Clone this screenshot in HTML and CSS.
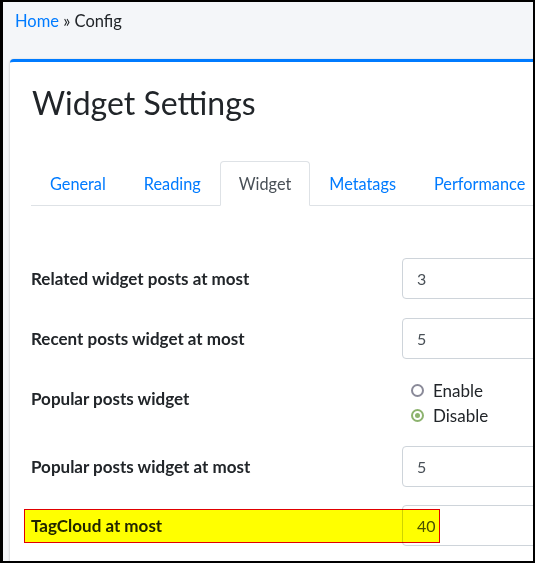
FILE: index.html
```html
<!DOCTYPE html>
<html>
<head>
<meta charset="utf-8">
<link rel="stylesheet" href="styles.css">
</head>
<body>
<div class="frame">
  <div class="breadcrumb"><a class="crumb-link">Home</a> » Config</div>
  <div class="card">
    <h1 class="title">Widget Settings</h1>
    <ul class="tabs">
      <li class="tab">General</li>
      <li class="tab">Reading</li>
      <li class="tab active">Widget</li>
      <li class="tab">Metatags</li>
      <li class="tab">Performance</li>
    </ul>
    <div class="form">
      <div class="row">
        <div class="label">Related widget posts at most</div>
        <div class="input">3</div>
      </div>
      <div class="row">
        <div class="label">Recent posts widget at most</div>
        <div class="input">5</div>
      </div>
      <div class="row">
        <div class="label">Popular posts widget</div>
        <div class="radios">
          <div class="radio"><span class="dot"></span>Enable</div>
          <div class="radio"><span class="dot checked"></span>Disable</div>
        </div>
      </div>
      <div class="row tight">
        <div class="label">Popular posts widget at most</div>
        <div class="input">5</div>
      </div>
      <div class="row">
        <div class="label">TagCloud at most</div>
        <div class="input">40</div>
        <div class="highlight"></div>
      </div>
    </div>
  </div>
</div>
</body>
</html>
```

FILE: styles.css
```css
* { box-sizing: border-box; }
html, body { margin: 0; padding: 0; }
body { font-family: "Lato", "Open Sans", sans-serif; color: #212529; }
.frame {
  width: 535px;
  height: 563px;
  border: 2px solid #000;
  border-left-width: 3px;
  background: #f4f6f9;
  overflow: hidden;
}
.breadcrumb {
  padding: 7px 0 0 12px;
  height: 57px;
  font-size: 16.5px;
  line-height: 24px;
  color: #212529;
}
.crumb-link { color: #007bff; }
.card {
  margin-left: 7px;
  width: 700px;
  background: #fff;
  border-top: 3px solid #007bff;
  border-radius: 4px 0 0 0;
  box-shadow: 0 0 1px rgba(0,0,0,.125), 0 1px 3px rgba(0,0,0,.2);
  padding: 22px 0 30px 21px;
  height: 600px;
}
.title {
  margin: 0 0 0 1px;
  font-size: 32px;
  font-weight: 400;
  line-height: 38px;
}
.tabs {
  list-style: none;
  margin: 39px 0 0 0;
  padding: 0;
  display: flex;
  border-bottom: 1px solid #dee2e6;
  width: 680px;
}
.tab {
  padding: 10px 18px 9px;
  line-height: 24px;
  font-size: 16.3px;
  color: #007bff;
  border: 1px solid transparent;
  border-top-left-radius: 4px;
  border-top-right-radius: 4px;
  margin-bottom: -1px;
  white-space: nowrap;
}
.tab.active {
  color: #495057;
  border-color: #dee2e6 #dee2e6 #fff;
  background: #fff;
}
.form { margin-top: 52px; }
.row {
  position: relative;
  display: grid;
  grid-template-columns: 371px 1fr;
  margin-bottom: 19px;
}
.row.tight { margin-bottom: 18px; }
.label {
  padding-top: 9px;
  font-weight: 700;
  font-size: 17px;
  line-height: 24px;
}
.input {
  height: 41px;
  border: 1px solid #ced4da;
  border-radius: 4px;
  padding: 8px 14px;
  font-size: 16px;
  line-height: 24px;
  color: #495057;
}
.radios { padding: 0 0 0 9px; height: 49px; }
.radio {
  display: flex;
  align-items: center;
  height: 25px;
  font-size: 17px;
  color: #212529;
}
.dot {
  width: 13px;
  height: 13px;
  border: 2px solid #8a8a99;
  border-radius: 50%;
  margin-right: 9px;
  position: relative;
}
.dot.checked { border-color: #8db36f; }
.dot.checked::after {
  content: "";
  position: absolute;
  left: 2px; top: 2px;
  width: 5px; height: 5px;
  border-radius: 50%;
  background: #8db36f;
}
.highlight {
  position: absolute;
  left: -7px;
  top: 4px;
  width: 416px;
  height: 34px;
  background: #ffff00;
  border: 1px solid #e00000;
  mix-blend-mode: multiply;
}
```
